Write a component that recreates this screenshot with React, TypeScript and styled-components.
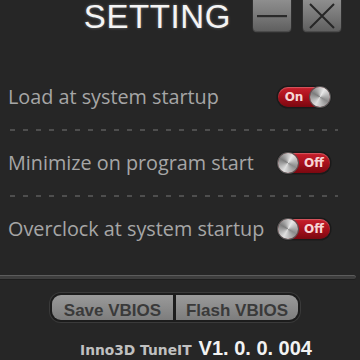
import React from "react";
import styled, { createGlobalStyle } from "styled-components";

const Global = createGlobalStyle`
  html, body { margin: 0; padding: 0; background: #262626; }
  #root { width: 360px; height: 360px; overflow: hidden; }
`;

const Window = styled.div`
  width: 360px;
  height: 360px;
  background: #262626;
  display: flex;
  flex-direction: column;
  font-family: "Liberation Sans", Arial, sans-serif;
`;

const Header = styled.div`
  height: 33px;
  display: flex;
  align-items: flex-start;
  justify-content: flex-end;
  padding-right: 19px;
`;

const Title = styled.div`
  font-family: "Liberation Sans", Arial, sans-serif;
  font-size: 33px;
  line-height: 33px;
  color: #f4f4f4;
  letter-spacing: 0.6px;
  margin-right: 22px;
  text-shadow: 0 0 3px rgba(255, 255, 255, 0.35);
`;

const WinButton = styled.div<{ $gap?: number }>`
  width: 38px;
  height: 32px;
  margin-left: ${(p) => p.$gap ?? 0}px;
  border-radius: 0 0 4px 4px;
  background: linear-gradient(180deg, #8e8e8e 0%, #7a7a7a 45%, #5e5e5e 100%);
  box-shadow: inset 0 -1px 0 #4a4a4a, 0 0 0 1px #303030;
  display: flex;
  align-items: center;
  justify-content: center;
`;

const List = styled.div`
  margin-top: 32px;
  display: flex;
  flex-direction: column;
`;

const Row = styled.div`
  height: 64px;
  display: flex;
  align-items: center;
  justify-content: space-between;
  padding: 0 30px 0 8px;
  box-sizing: border-box;
`;

const Label = styled.div`
  font-family: "Open Sans", "Noto Sans", sans-serif;
  font-size: 19.8px;
  color: #a6a6a6;
  margin-top: -2px;
`;

const Dashes = styled.div`
  height: 2px;
  margin: 0 22px 0 10px;
  background: repeating-linear-gradient(
    90deg,
    #4e4e4e 0px,
    #4e4e4e 5px,
    transparent 5px,
    transparent 13px
  );
`;

const Toggle = styled.div<{ $on: boolean }>`
  width: 52px;
  height: 20px;
  border-radius: 10px;
  display: flex;
  align-items: center;
  flex-direction: ${(p) => (p.$on ? "row" : "row-reverse")};
  background: linear-gradient(180deg, #c8202c 0%, #a8101c 50%, #7a0810 100%);
  box-shadow: 0 0 0 1.5px #1a1a1a, inset 0 1px 1px rgba(255, 255, 255, 0.25);
`;

const ToggleText = styled.span`
  flex: 1;
  text-align: center;
  font-family: "DejaVu Sans", Verdana, sans-serif;
  font-weight: bold;
  font-size: 12px;
  color: #f6d6d6;
  line-height: 20px;
`;

const Knob = styled.div`
  width: 20px;
  height: 20px;
  border-radius: 50%;
  background: conic-gradient(
    from 30deg,
    #e8e8e8,
    #8a8a8a 25%,
    #e0e0e0 50%,
    #7c7c7c 75%,
    #e8e8e8
  );
  box-shadow: 0 0 0 1px #555;
`;

const Groove = styled.div`
  margin-top: 14px;
  margin-right: 4px;
  height: 4px;
  border-top: 1px solid #5c5c5c;
  border-bottom: 1px solid #1e1e1e;
  background: #3e3e3e;
  border-radius: 0 3px 3px 0;
`;

const ButtonBar = styled.div`
  margin: 15px 0 0 52px;
  width: 246px;
  height: 31px;
  display: flex;
  border-radius: 9px;
  overflow: hidden;
  box-shadow: 0 0 0 2px #1c1c1c, 0 0 0 3px #3a3a3a;
  background: #1c1c1c;
  gap: 3px;
`;

const ActionButton = styled.div<{ $w: number }>`
  width: ${(p) => p.$w}px;
  height: 31px;
  display: flex;
  align-items: center;
  justify-content: center;
  background: linear-gradient(180deg, #9a9a9a 0%, #888888 50%, #767676 100%);
  font-family: "Liberation Sans", Arial, sans-serif;
  font-weight: bold;
  font-size: 17px;
  color: #3a3a3a;
`;

const Footer = styled.div`
  margin-top: 17px;
  padding-left: 80px;
  display: flex;
  align-items: baseline;
  gap: 7px;
`;

const Brand = styled.span`
  font-family: "DejaVu Sans", Verdana, sans-serif;
  font-weight: bold;
  font-size: 13.8px;
  color: #c0c0c0;
`;

const Version = styled.span`
  font-family: "Liberation Sans", Arial, sans-serif;
  font-weight: bold;
  font-size: 20px;
  color: #f2f2f2;
`;

const settings = [
  { label: "Load at system startup", on: true },
  { label: "Minimize on program start", on: false },
  { label: "Overclock at system startup", on: false },
];

export default function App() {
  return (
    <>
      <Global />
      <Window>
        <Header>
          <Title>SETTING</Title>
          <WinButton>
            <svg width="30" height="4" viewBox="0 0 30 4">
              <rect x="0" y="1" width="30" height="2.2" fill="#2a2a2a" />
            </svg>
          </WinButton>
          <WinButton $gap={12}>
            <svg width="26" height="26" viewBox="0 0 26 26">
              <path d="M1 1 L25 25 M25 1 L1 25" stroke="#262626" strokeWidth="2" />
            </svg>
          </WinButton>
        </Header>
        <List>
          {settings.map((s, i) => (
            <React.Fragment key={s.label}>
              {i > 0 && <Dashes />}
              <Row>
                <Label>{s.label}</Label>
                <Toggle $on={s.on}>
                  <ToggleText>{s.on ? "On" : "Off"}</ToggleText>
                  <Knob />
                </Toggle>
              </Row>
            </React.Fragment>
          ))}
        </List>
        <Groove />
        <ButtonBar>
          <ActionButton $w={121}>Save VBIOS</ActionButton>
          <ActionButton $w={122}>Flash VBIOS</ActionButton>
        </ButtonBar>
        <Footer>
          <Brand>Inno3D TuneIT</Brand>
          <Version>V1. 0. 0. 004</Version>
        </Footer>
      </Window>
    </>
  );
}
